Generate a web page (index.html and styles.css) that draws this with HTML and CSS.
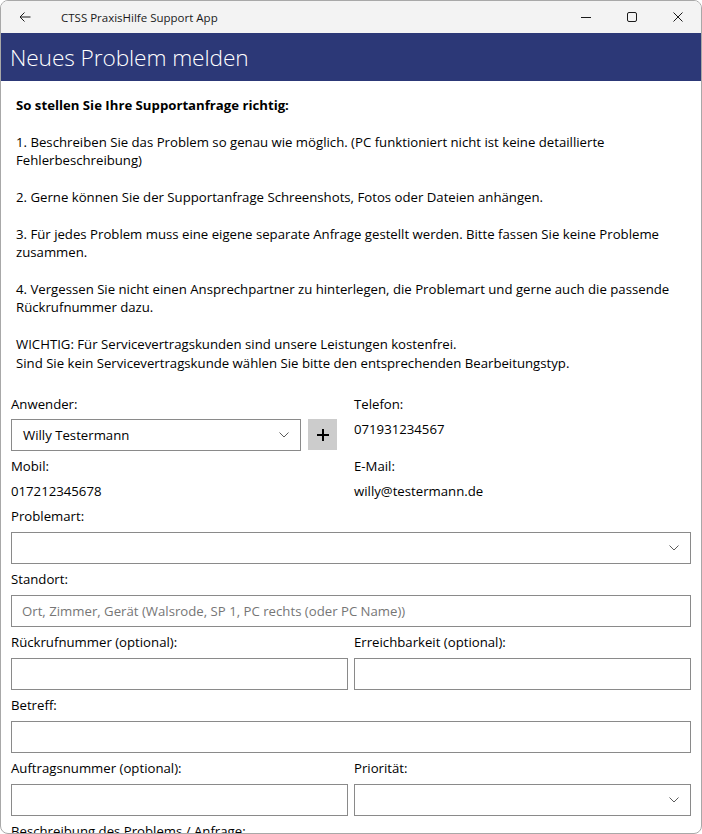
FILE: index.html
```html
<!DOCTYPE html>
<html lang="de">
<head>
  <meta charset="UTF-8">
  <meta name="viewport" content="width=device-width, initial-scale=1.0">
  <title>CTSS PraxisHilfe Support App</title>
  <link rel="stylesheet" href="styles.css">
</head>
<body>
  <div class="window">
    <!-- Title bar -->
    <div class="titlebar">
      <div class="titlebar-left">
        <span class="back-btn">
          <svg width="12" height="10" viewBox="0 0 12 10"><path d="M11.5 5H1M5.5 0.5L1 5l4.5 4.5" fill="none" stroke="#1a1a1a" stroke-width="1"/></svg>
        </span>
        <span class="app-title">CTSS PraxisHilfe Support App</span>
      </div>
      <div class="window-controls">
        <span class="ctrl">
          <svg width="10" height="10" viewBox="0 0 10 10"><path d="M0 5.5h10" stroke="#1a1a1a" stroke-width="1"/></svg>
        </span>
        <span class="ctrl">
          <svg width="10" height="10" viewBox="0 0 10 10"><rect x="0.5" y="0.5" width="9" height="9" rx="1.5" fill="none" stroke="#1a1a1a" stroke-width="1"/></svg>
        </span>
        <span class="ctrl">
          <svg width="10" height="10" viewBox="0 0 10 10"><path d="M0.5 0.5l9 9M9.5 0.5l-9 9" stroke="#1a1a1a" stroke-width="1"/></svg>
        </span>
      </div>
    </div>

    <!-- Header -->
    <header class="page-header">
      <h1>Neues Problem melden</h1>
    </header>

    <!-- Content -->
    <main class="content">
      <div class="info">
        <p class="info-title">So stellen Sie Ihre Supportanfrage richtig:</p>
        <p>1. Beschreiben Sie das Problem so genau wie möglich. (PC funktioniert nicht ist keine detaillierte Fehlerbeschreibung)</p>
        <p>2. Gerne können Sie der Supportanfrage Schreenshots, Fotos oder Dateien anhängen.</p>
        <p>3. Für jedes Problem muss eine eigene separate Anfrage gestellt werden. Bitte fassen Sie keine Probleme zusammen.</p>
        <p>4. Vergessen Sie nicht einen Ansprechpartner zu hinterlegen, die Problemart und gerne auch die passende Rückrufnummer dazu.</p>
        <p>WICHTIG: Für Servicevertragskunden sind unsere Leistungen kostenfrei.<br>Sind Sie kein Servicevertragskunde wählen Sie bitte den entsprechenden Bearbeitungstyp.</p>
      </div>

      <div class="contact-grid">
        <span class="label">Anwender:</span>
        <span class="label">Telefon:</span>
        <div class="user-row">
          <div class="select user-select">
            <span class="select-value">Willy Testermann</span>
            <svg class="chevron" width="10" height="6" viewBox="0 0 10 6"><path d="M0.5 0.5L5 5l4.5-4.5" fill="none" stroke="#5c5c5c" stroke-width="1"/></svg>
          </div>
          <button type="button" class="add-btn">
            <svg width="12" height="12" viewBox="0 0 12 12"><path d="M6 0v12M0 6h12" stroke="#000" stroke-width="2"/></svg>
          </button>
        </div>
        <span class="value">071931234567</span>
        <span class="label">Mobil:</span>
        <span class="label">E-Mail:</span>
        <span class="value">017212345678</span>
        <span class="value">willy@testermann.de</span>
      </div>

      <div class="field">
        <label>Problemart:</label>
        <div class="select">
          <span class="select-value"></span>
          <svg class="chevron" width="10" height="6" viewBox="0 0 10 6"><path d="M0.5 0.5L5 5l4.5-4.5" fill="none" stroke="#5c5c5c" stroke-width="1"/></svg>
        </div>
      </div>

      <div class="field">
        <label for="standort">Standort:</label>
        <input type="text" id="standort" placeholder="Ort, Zimmer, Gerät (Walsrode, SP 1, PC rechts (oder PC Name))">
      </div>

      <div class="field-row">
        <div class="field">
          <label for="rueckruf">Rückrufnummer (optional):</label>
          <input type="text" id="rueckruf">
        </div>
        <div class="field">
          <label for="erreichbar">Erreichbarkeit (optional):</label>
          <input type="text" id="erreichbar">
        </div>
      </div>

      <div class="field">
        <label for="betreff">Betreff:</label>
        <input type="text" id="betreff">
      </div>

      <div class="field-row">
        <div class="field">
          <label for="auftrag">Auftragsnummer (optional):</label>
          <input type="text" id="auftrag">
        </div>
        <div class="field">
          <label>Priorität:</label>
          <div class="select">
            <span class="select-value"></span>
            <svg class="chevron" width="10" height="6" viewBox="0 0 10 6"><path d="M0.5 0.5L5 5l4.5-4.5" fill="none" stroke="#5c5c5c" stroke-width="1"/></svg>
          </div>
        </div>
      </div>

      <div class="field">
        <label for="beschreibung">Beschreibung des Problems / Anfrage:</label>
        <textarea id="beschreibung" rows="6"></textarea>
      </div>
    </main>
  </div>
</body>
</html>
```

FILE: styles.css
```css
html, body {
  margin: 0;
  padding: 0;
  background: #ffffff;
}
body {
  font-family: "Open Sans", "Noto Sans", sans-serif;
  font-size: 13.2px;
  color: #000;
}
.window {
  box-sizing: border-box;
  width: 702px;
  height: 834px;
  border: 1px solid #a8a8a8;
  border-radius: 8px;
  overflow: hidden;
  background: #fff;
  display: flex;
  flex-direction: column;
}

/* Title bar */
.titlebar {
  height: 32px;
  flex: none;
  background: #f3f3f3;
  display: flex;
  justify-content: space-between;
  align-items: center;
}
.titlebar-left {
  display: flex;
  align-items: center;
}
.back-btn {
  width: 48px;
  display: flex;
  justify-content: center;
}
.app-title {
  font-size: 11.5px;
  margin-left: 12px;
  color: #1a1a1a;
}
.window-controls {
  display: flex;
  height: 100%;
}
.ctrl {
  width: 46px;
  display: flex;
  align-items: center;
  justify-content: center;
}

/* Header */
.page-header {
  flex: none;
  height: 48px;
  background: #2c3877;
  display: flex;
  align-items: center;
  padding: 0 9px;
}
.page-header h1 {
  margin: 0;
  font-size: 22.7px;
  font-weight: 300;
  color: #fff;
  letter-spacing: -0.1px;
}

/* Content */
.content {
  padding: 0 10px;
}
.info {
  padding: 15px 0 0 5px;
  line-height: 18.4px;
}
.info p {
  margin: 0 0 18.4px;
}
.info p:last-child {
  margin-bottom: 0;
}
.info-title {
  font-weight: 700;
}

.contact-grid {
  display: grid;
  grid-template-columns: 1fr 1fr;
  grid-template-rows: 20px 32px 20px 20px;
  column-gap: 6px;
  row-gap: 5px;
  margin-top: 22px;
}
.label, .value, .field label {
  line-height: 20px;
}
.user-row {
  display: flex;
  gap: 7px;
}
.user-row .user-select {
  width: 290px;
  flex: none;
}
.add-btn {
  width: 29px;
  height: 31px;
  border: none;
  background: #cccccc;
  padding: 0;
  display: flex;
  align-items: center;
  justify-content: center;
}

.field {
  display: flex;
  flex-direction: column;
  gap: 6px;
  margin-top: 5px;
}
.field-row {
  display: grid;
  grid-template-columns: 1fr 1fr;
  column-gap: 6px;
}
.field-row .field {
  min-width: 0;
}

input, textarea, .select {
  box-sizing: border-box;
  height: 32px;
  border: 1px solid #8a8a8a;
  background: #fff;
  font-family: inherit;
  font-size: 13.2px;
  padding: 0 10px;
  margin: 0;
  width: 100%;
}
input::placeholder {
  color: #767676;
}
textarea {
  height: 90px;
  resize: none;
}
.select {
  display: flex;
  align-items: center;
  justify-content: space-between;
  padding: 0 11px;
}
.chevron {
  flex: none;
}
```
